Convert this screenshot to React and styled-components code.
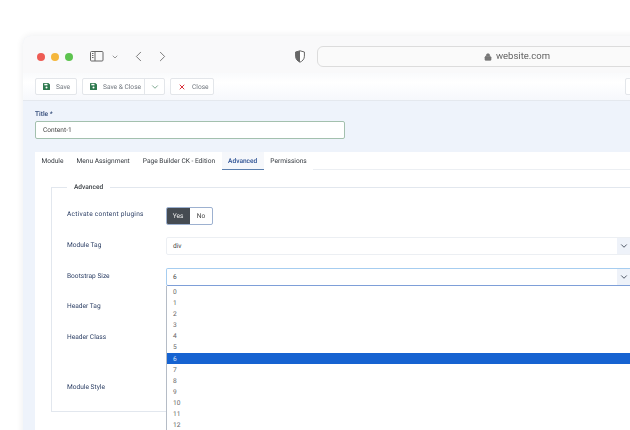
import React from "react"
import styled, { createGlobalStyle } from "styled-components"
import { ChevronDown, ChevronLeft, ChevronRight, Lock, X } from "lucide-react"

const Global = createGlobalStyle`
  html, body {
    margin: 0;
    width: 630px;
    height: 430px;
    overflow: hidden;
    background: #fff;
    font-family: Roboto, "Liberation Sans", sans-serif;
    text-rendering: geometricPrecision;
  }
  * { box-sizing: border-box; }
`

const Stage = styled.div`
  width: 630px;
  height: 430px;
  padding: 36px 0 0 23px;
  overflow: hidden;
`

const Win = styled.div`
  width: 720px;
  height: 420px;
  border-radius: 8px 0 0 0;
  overflow: hidden;
  box-shadow: 0 0 10px rgba(40, 50, 70, 0.09);
  background: #eef3fb;
  filter: blur(0.3px);
  opacity: 0.999;
  will-change: opacity;
`

const TitleBar = styled.div`
  height: 37px;
  display: flex;
  align-items: center;
  background: #f9f9fa;
  padding: 4px 0 0 14px;
`

const Dot = styled.span`
  width: 8px;
  height: 8px;
  border-radius: 50%;
  margin-right: 6px;
  background: ${props => props.color};
`

const IconSlot = styled.span`
  display: flex;
  align-items: center;
  color: #666;
  margin-left: ${props => props.left || 0}px;
`

const AddressBar = styled.div`
  margin-left: 12px;
  width: 400px;
  height: 21px;
  border: 1px solid #dcdcdc;
  border-radius: 6px;
  background: #fafafa;
  display: flex;
  align-items: center;
  justify-content: center;
  gap: 4px;
  color: #666;
  font-size: 9.5px;
`

const Toolbar = styled.div`
  height: 28px;
  display: flex;
  align-items: center;
  padding: 0 0 0 12px;
  gap: 5px;
  background: linear-gradient(#f9fafc, #ffffff 35%, #f6f8fc);
  border-bottom: 1px solid #e4e8ee;
`

const ToolButton = styled.div`
  width: ${props => props.w}px;
  height: 17px;
  display: flex;
  align-items: center;
  border: 1px solid #e3e6ea;
  border-radius: 2px;
  background: #fff;
  color: #6f757d;
  font-size: 6.6px;
`

const ToolLabel = styled.span`
  display: flex;
  align-items: center;
  flex: 1;
  height: 100%;
  gap: 6px;
  padding-left: 7px;
  white-space: nowrap;
`

const Caret = styled.span`
  display: flex;
  align-items: center;
  justify-content: center;
  width: 20px;
  height: 100%;
  border-left: 1px solid #e3e6ea;
  color: #3f7d5a;
`

const Spacer = styled.div`
  margin-left: 406px;
  width: 20px;
  height: 17px;
  border: 1px solid #e3e6ea;
  border-radius: 2px;
  background: #fff;
`

const Body = styled.div`
  padding: 0 0 0 12px;
`

const TitleLabel = styled.div`
  padding-top: 9px;
  height: 20px;
  font-size: 6.6px;
  font-weight: 500;
  color: #2a4373;
`

const TitleInput = styled.div`
  width: 310px;
  height: 18px;
  border: 1px solid #a3c0ae;
  border-radius: 2px;
  background: #fff;
  font-size: 6.6px;
  color: #444;
  padding: 4px 7px;
  margin-bottom: 13px;
`

const Panel = styled.div`
  background: #fff;
  height: 278px;
`

const Tabs = styled.div`
  display: flex;
  height: 18px;
  border-bottom: 1px solid #eceff3;
`

const Tab = styled.div`
  height: 18px;
  padding: 5px 6.5px 0;
  font-size: 6.6px;
  white-space: nowrap;
  color: ${props => (props.$active ? "#2a4f92" : "#33383e")};
  font-weight: ${props => (props.$active ? 500 : 400)};
  background: ${props => (props.$active ? "#f5f7fb" : "#fff")};
  border-bottom: ${props => (props.$active ? "1.5px solid #5b7fae" : "none")};
`

const Fieldset = styled.fieldset`
  margin: 13px 0 0 16px;
  padding: 16px 0 0;
  height: 229px;
  border: 1px solid #e2e7ee;
  position: relative;
`

const Legend = styled.legend`
  margin-left: 15px;
  padding: 0 7px;
  font-size: 6.6px;
  font-weight: 500;
  color: #3c4146;
`

const Row = styled.div`
  display: flex;
  height: ${props => props.h}px;
  padding-left: 15px;
`

const Label = styled.div`
  width: 99px;
  padding-top: ${props => props.top}px;
  font-size: 6.6px;
  letter-spacing: ${props => props.$track || 0}px;
  white-space: nowrap;
  color: #2a3d63;
`

const Toggle = styled.div`
  display: flex;
  width: 47px;
  height: 18px;
  border: 1px solid #9db1d0;
  border-radius: 2px;
  overflow: hidden;
  font-size: 6.6px;
`

const ToggleYes = styled.span`
  width: 24px;
  margin: -1px 0 -1px -1px;
  background: #454b52;
  color: #f2f2f2;
  display: flex;
  align-items: center;
  justify-content: center;
`

const ToggleNo = styled.span`
  flex: 1;
  color: #444;
  display: flex;
  align-items: center;
  justify-content: center;
`

const Select = styled.div`
  width: 600px;
  height: 18px;
  border: 1px solid ${props => (props.$open ? "#a6cdf0" : "#eceff3")};
  border-bottom-color: ${props => (props.$open ? "#7e9fd8" : "#eceff3")};
  border-radius: 2px;
  font-size: 6.6px;
  color: #444;
  display: flex;
  align-items: center;
  padding-left: 6px;
  position: relative;
  background: #fff;
`

const SelectArrow = styled.span`
  position: absolute;
  left: 450px;
  top: 0;
  bottom: 0;
  width: 14px;
  display: flex;
  align-items: center;
  justify-content: center;
  background: #eef2f9;
  color: #333c4a;
`

const Dropdown = styled.div`
  position: absolute;
  left: 114px;
  top: 95px;
  width: 600px;
  background: #fff;
  border-left: 1px solid #b5bcc6;
  z-index: 2;
  font-size: 6.6px;
`

const Option = styled.div`
  height: 11.1px;
  line-height: 12px;
  padding-left: 6px;
  background: ${props => (props.$selected ? "#1663d1" : "transparent")};
  color: ${props => (props.$selected ? "#d8e4f7" : "#666")};
`

const SidebarIcon = () => (
  <svg width="14" height="11" viewBox="0 0 14 11" fill="none" stroke="#666" strokeWidth="1">
    <rect x="0.5" y="0.5" width="12.5" height="9.5" rx="1" />
    <path d="M5 0.5v9.5" />
    <path d="M2 2.5h1.5M2 4.5h1.5M2 6.5h1.5" />
  </svg>
)

const ShieldIcon = () => (
  <svg width="10" height="13" viewBox="0 0 10 13">
    <path d="M5 .8 9.4 2v4.2c0 2.9-2 5-4.4 6-2.4-1-4.4-3.1-4.4-6V2z" fill="#fff" stroke="#666" strokeWidth="1" />
    <path d="M5 .8 .6 2v4.2c0 2.9 2 5 4.4 6z" fill="#666" />
  </svg>
)

const SaveIcon = () => (
  <svg width="7" height="7" viewBox="0 0 7 7">
    <path d="M.6 0h4.7L7 1.6v4.8c0 .3-.3.6-.6.6H.6C.3 7 0 6.7 0 6.4V.6C0 .3.3 0 .6 0z" fill="#2f7a4f" />
    <rect x="1.3" y="0.8" width="3.2" height="1.5" fill="#fff" />
    <circle cx="3.5" cy="4.5" r="1" fill="#fff" />
  </svg>
)

const options = ["0", "1", "2", "3", "4", "5", "6", "7", "8", "9", "10", "11", "12"]
const tabs = ["Module", "Menu Assignment", "Page Builder CK - Edition", "Advanced", "Permissions"]

export default function App() {
  return (
    <Stage>
      <Global />
      <Win>
        <TitleBar>
          <Dot color="#ee5c54" />
          <Dot color="#f5b73c" />
          <Dot color="#5dc34f" />
          <IconSlot left={11}><SidebarIcon /></IconSlot>
          <IconSlot left={7}><ChevronDown size={8} strokeWidth={2} /></IconSlot>
          <IconSlot left={11}><ChevronLeft size={17} strokeWidth={1.2} /></IconSlot>
          <IconSlot left={7}><ChevronRight size={17} strokeWidth={1.2} /></IconSlot>
          <IconSlot left={124}><ShieldIcon /></IconSlot>
          <AddressBar>
            <Lock size={8} fill="#777" color="#777" />
            website.com
          </AddressBar>
        </TitleBar>
        <Toolbar>
          <ToolButton w={42}>
            <ToolLabel><SaveIcon /> Save</ToolLabel>
          </ToolButton>
          <ToolButton w={83}>
            <ToolLabel><SaveIcon /> Save &amp; Close</ToolLabel>
            <Caret><ChevronDown size={10} strokeWidth={1.6} /></Caret>
          </ToolButton>
          <ToolButton w={44}>
            <ToolLabel><X size={8} color="#d9323c" strokeWidth={3} /> Close</ToolLabel>
          </ToolButton>
          <Spacer />
        </Toolbar>
        <Body>
          <TitleLabel>Title *</TitleLabel>
          <TitleInput>Content-1</TitleInput>
          <Panel>
            <Tabs>
              {tabs.map(t => (
                <Tab key={t} $active={t === "Advanced"}>{t}</Tab>
              ))}
            </Tabs>
            <Fieldset>
              <Legend>Advanced</Legend>
              <Row h={30}>
                <Label top={3} $track={0.25}>Activate content plugins</Label>
                <Toggle>
                  <ToggleYes>Yes</ToggleYes>
                  <ToggleNo>No</ToggleNo>
                </Toggle>
              </Row>
              <Row h={31}>
                <Label top={4}>Module Tag</Label>
                <Select>div<SelectArrow><ChevronDown size={10} strokeWidth={2} /></SelectArrow></Select>
              </Row>
              <Row h={30}>
                <Label top={4}>Bootstrap Size</Label>
                <Select $open>6<SelectArrow><ChevronDown size={10} strokeWidth={2} /></SelectArrow></Select>
              </Row>
              <Row h={31}><Label top={4}>Header Tag</Label></Row>
              <Row h={50}><Label top={4}>Header Class</Label></Row>
              <Row h={30}><Label top={4}>Module Style</Label></Row>
              <Dropdown>
                {options.map(o => (
                  <Option key={o} $selected={o === "6"}>{o}</Option>
                ))}
              </Dropdown>
            </Fieldset>
          </Panel>
        </Body>
      </Win>
    </Stage>
  )
}
